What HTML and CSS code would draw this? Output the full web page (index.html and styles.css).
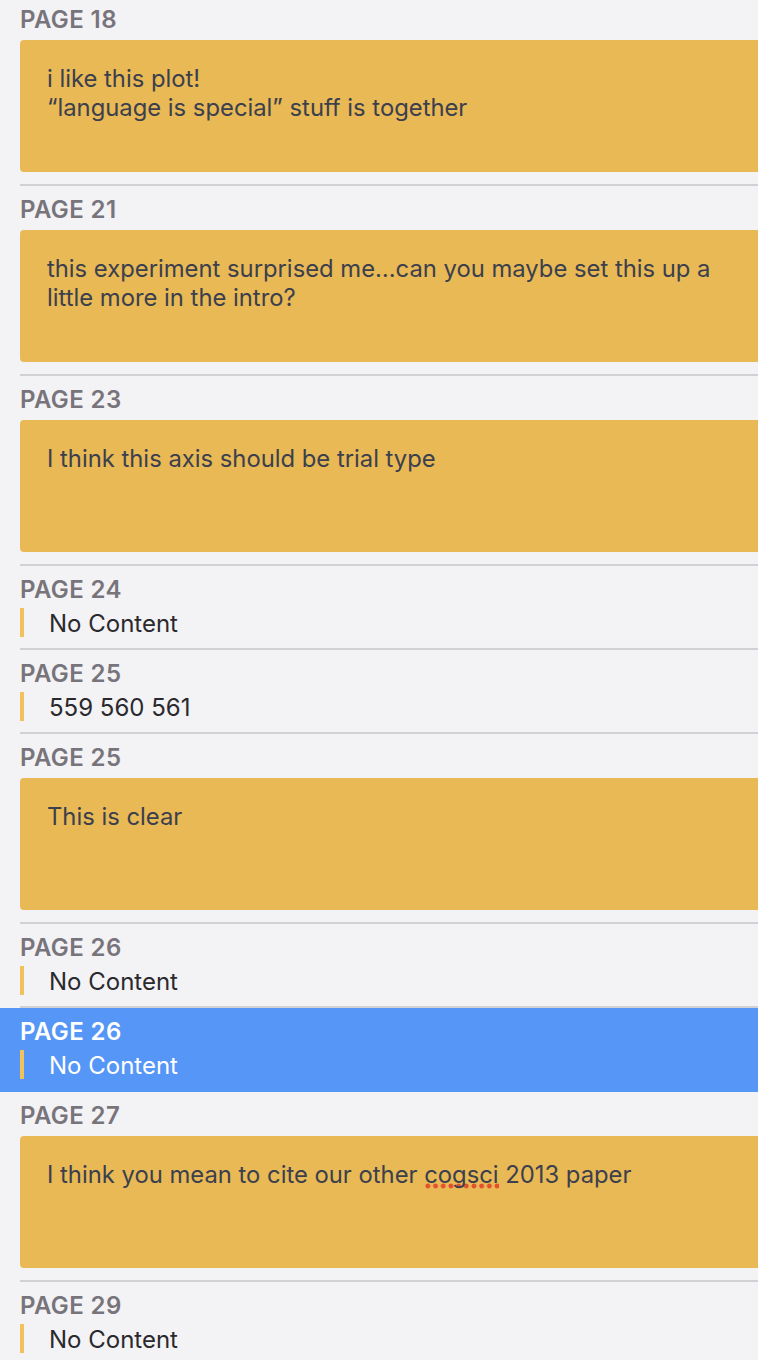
FILE: index.html
```html
<!DOCTYPE html>
<html>
<head>
<meta charset="utf-8">
<link rel="stylesheet" href="styles.css">
</head>
<body>
<div class="list">
  <div class="item">
    <div class="inner">
      <div class="label">PAGE 18</div>
      <div class="note">i like this plot!<br>“language is special” stuff is together</div>
    </div>
  </div>
  <div class="item">
    <div class="inner">
      <div class="label">PAGE 21</div>
      <div class="note">this experiment surprised me…can you maybe set this up a little more in the intro?</div>
    </div>
  </div>
  <div class="item">
    <div class="inner">
      <div class="label">PAGE 23</div>
      <div class="note">I think this axis should be trial type</div>
    </div>
  </div>
  <div class="item">
    <div class="inner">
      <div class="label">PAGE 24</div>
      <div class="quote">No Content</div>
    </div>
  </div>
  <div class="item">
    <div class="inner">
      <div class="label">PAGE 25</div>
      <div class="quote">559 560 561</div>
    </div>
  </div>
  <div class="item">
    <div class="inner">
      <div class="label">PAGE 25</div>
      <div class="note">This is clear</div>
    </div>
  </div>
  <div class="item">
    <div class="inner">
      <div class="label">PAGE 26</div>
      <div class="quote">No Content</div>
    </div>
  </div>
  <div class="item selected">
    <div class="inner">
      <div class="label">PAGE 26</div>
      <div class="quote">No Content</div>
    </div>
  </div>
  <div class="item">
    <div class="inner">
      <div class="label">PAGE 27</div>
      <div class="note">I think you mean to cite our other <span class="misspelled">cogsci</span> 2013 paper</div>
    </div>
  </div>
  <div class="item">
    <div class="inner">
      <div class="label">PAGE 29</div>
      <div class="quote">No Content</div>
    </div>
  </div>
</div>
</body>
</html>
```

FILE: styles.css
```css
html, body {
  margin: 0;
  padding: 0;
  background: #f3f2f5;
  overflow: hidden;
  width: 758px;
  height: 1360px;
}

body {
  font-family: Inter, "Noto Sans", "Liberation Sans", sans-serif;
}

.list {
  margin-top: -4px;
  display: flex;
  flex-direction: column;
}

.item {
  padding-left: 20px;
}

.inner {
  border-bottom: 2px solid #d1d0d4;
  padding-top: 10px;
  margin-right: -20px;
}

.label {
  font-size: 24px;
  line-height: 28px;
  font-weight: 600;
  letter-spacing: 0.4px;
  color: #77747b;
}

.note {
  margin-top: 6px;
  margin-bottom: 12px;
  height: 132px;
  box-sizing: border-box;
  padding: 24px 60px 0 27px;
  background: #e8b955;
  border-radius: 4px;
  font-size: 23.8px;
  line-height: 29px;
  color: #3c3f4d;
}

.quote {
  margin-top: 4px;
  margin-bottom: 11px;
  border-left: 4px solid #f1c15c;
  padding: 2px 0 0 25px;
  font-size: 24px;
  line-height: 27px;
  color: #2a292d;
}

.selected {
  background: #5596f6;
}

.selected .inner {
  border-bottom-color: transparent;
}

.selected .label,
.selected .quote {
  color: #ffffff;
}

.misspelled {
  background-image: radial-gradient(circle, #e4512f 2.1px, rgba(228, 81, 47, 0) 2.8px);
  background-size: 7.7px 6px;
  background-repeat: repeat-x;
  background-position: 0 calc(100% - 0.5px);
}
```
